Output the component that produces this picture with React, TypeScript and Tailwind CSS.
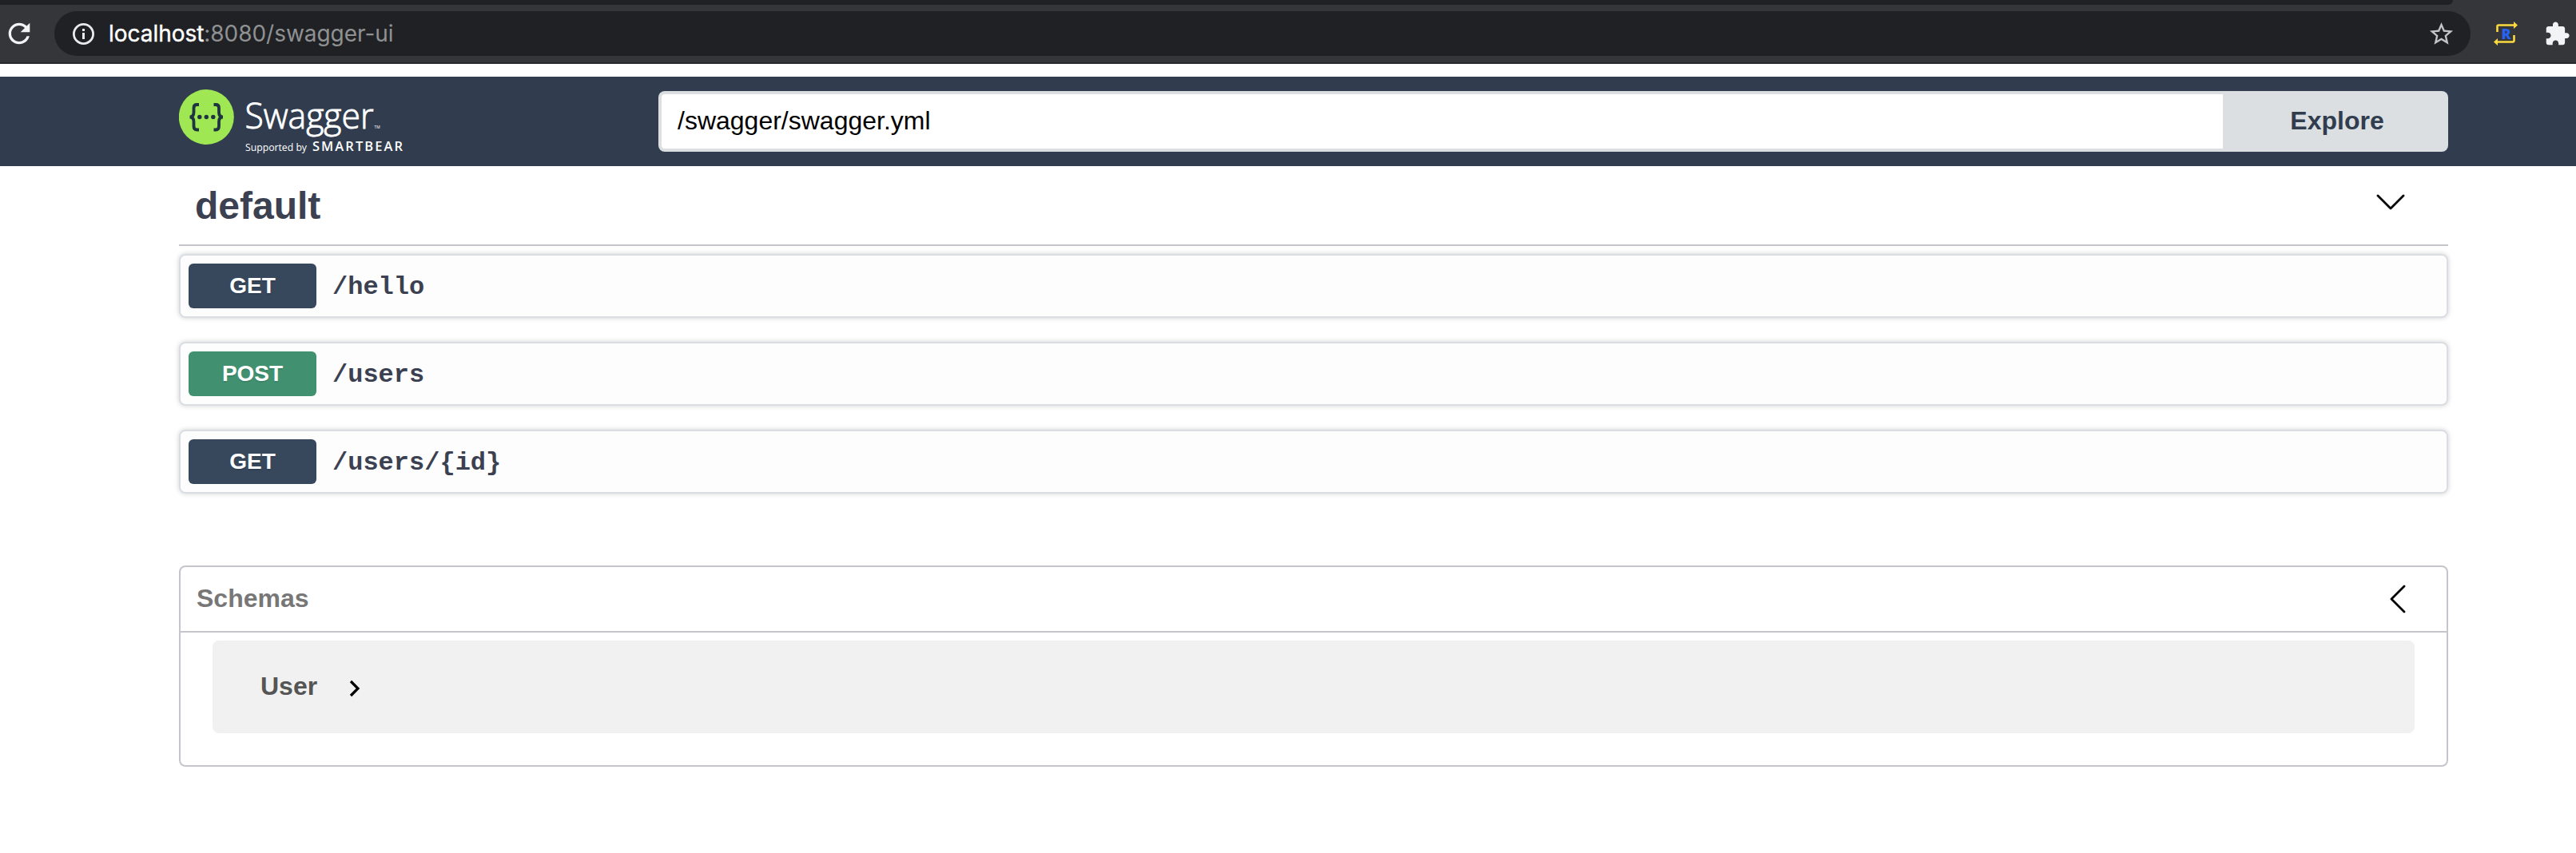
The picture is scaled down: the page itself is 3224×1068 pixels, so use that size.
const operations = [
  { method: "GET", path: "/hello", badge: "bg-[#37475c]" },
  { method: "POST", path: "/users", badge: "bg-[#419171]" },
  { method: "GET", path: "/users/{id}", badge: "bg-[#37475c]" },
];

function BrowserBar() {
  return (
    <div className="h-20 bg-[#35363a] border-b-2 border-[#28292b]">
      <div className="h-[6px] w-[3070px] rounded-br-[18px] bg-[#202124]" />
      <div className="flex h-[72px] items-center">
        <svg className="ml-1 mr-6 h-10 w-10 shrink-0" viewBox="0 0 24 24" fill="#f1f3f4">
          <path d="M17.65 6.35C16.2 4.9 14.21 4 12 4c-4.42 0-7.99 3.58-7.99 8s3.57 8 7.99 8c3.73 0 6.84-2.55 7.73-6h-2.08c-.82 2.33-3.04 4-5.65 4-3.31 0-6-2.69-6-6s2.69-6 6-6c1.66 0 3.14.69 4.22 1.78L13 11h7V4l-2.35 2.35z" />
        </svg>
        <div className="flex h-14 w-[3024px] shrink-0 items-center rounded-full bg-[#202124] pl-[22px] pr-[19px]">
          <svg className="h-7 w-7 shrink-0" viewBox="0 0 28 28" fill="none">
            <circle cx="14.500" cy="14.500" r="12.100" stroke="#e8eaed" strokeWidth="2.800" />
            <path d="M14.500 8v3M14.500 13v8" stroke="#e8eaed" strokeWidth="3" />
          </svg>
          <div className="ml-[18px] flex-1 font-['Inter',sans-serif] text-[28px] leading-none tracking-[-0.04px] text-[#8f9193]">
            <span className="text-white [-webkit-text-stroke:0.4px_#fff]">localhost</span>:8080/swagger-ui
          </div>
          <svg className="h-[35px] w-[35px]" viewBox="0 0 24 24" fill="#c3c4c6">
            <path d="M22 9.24l-7.19-.62L12 2 9.19 8.63 2 9.24l5.46 4.73L5.82 21 12 17.27 18.18 21l-1.63-7.03L22 9.24zM12 15.4l-3.76 2.27 1-4.28-3.32-2.88 4.38-.38L12 6.1l1.71 4.04 4.38.38-3.32 2.88 1 4.28L12 15.4z" />
          </svg>
        </div>
        <svg className="ml-7 h-8 w-8 shrink-0" viewBox="0 0 32 32" fill="none">
          <path d="M5.500 14V7a1.500 1.500 0 0 1 1.500-1.500H26M26.500 18v7a1.500 1.500 0 0 1-1.500 1.500H6" stroke="#fbd93f" strokeWidth="2.600" />
          <path d="M26 1l5 4.500-5 4.500zM6 22l-5 4.500 5 4.500z" fill="#fbd93f" />
          <text x="10.500" y="22.500" className="font-['Open_Sans',sans-serif] text-[18px] font-extrabold" fill="#2563f0">R</text>
        </svg>
        <svg className="ml-8 h-[33px] w-[33px] shrink-0" viewBox="0 0 24 24" fill="#f1f3f4">
          <path d="M20.5 11H19V7c0-1.1-.9-2-2-2h-4V3.5C13 2.12 11.88 1 10.5 1S8 2.12 8 3.5V5H4c-1.1 0-1.99.9-1.99 2v3.8H3.5c1.49 0 2.7 1.21 2.7 2.7s-1.21 2.7-2.7 2.7H2V20c0 1.1.9 2 2 2h3.800v-1.500c0-1.490 1.210-2.700 2.700-2.700 1.490 0 2.700 1.210 2.700 2.700V22H17c1.100 0 2-.9 2-2v-4h1.500c1.380 0 2.500-1.120 2.500-2.500S21.880 11 20.500 11z" />
        </svg>
      </div>
    </div>
  );
}

function Logo() {
  return (
    <svg className="h-[84px] w-[290px] shrink-0" viewBox="224 110 290 84" fill="none">
      <circle cx="258.300" cy="146.500" r="34.500" fill="#9fe854" />
      <g stroke="#1f3440" strokeWidth="3.800">
        <path d="M249 131h-2.500q-4 0-4 4v5.500q0 6-5 6q5 0 5 6v5.500q0 4.500 4 4.500H249" />
        <path d="M267.500 131h2.500q4 0 4 4v5.500q0 6 5 6q-5 0-5 6v5.500q0 4.500-4 4.500h-2.500" />
      </g>
      <g fill="#1f3440">
        <circle cx="249.800" cy="146.500" r="2.700" />
        <circle cx="258.300" cy="146.500" r="2.700" />
        <circle cx="266.800" cy="146.500" r="2.700" />
      </g>
      <g fill="#fff" className="font-['Open_Sans',sans-serif]">
        <text x="306.500" y="161" textLength="161" lengthAdjust="spacingAndGlyphs" stroke="#fff" strokeWidth="0.900" className="text-[45px] font-light">Swagger</text>
        <text x="468.500" y="161" className="text-[5px]">TM</text>
        <text x="307" y="188.500" textLength="77" lengthAdjust="spacingAndGlyphs" className="text-[12.500px]">Supported by</text>
        <text x="391" y="188.500" textLength="113" className="text-[16.500px] font-semibold">SMARTBEAR</text>
      </g>
    </svg>
  );
}

export default function App() {
  return (
    <div className="h-[1068px] w-[3224px] overflow-hidden bg-white font-['Liberation_Sans',Arial,sans-serif] text-[#3b4151]">
      <BrowserBar />
      <header className="mt-4 flex h-28 items-center bg-[#313d4e] pl-[224px] pr-[160px]">
        <Logo />
        <div className="ml-[310px] flex h-[76px] w-[2240px] rounded-lg bg-[#dbdfe2] p-1">
          <div className="flex w-[1954px] items-center rounded-l-[4px] bg-white pb-[2px] pl-5 text-[32px] leading-none text-black">
            /swagger/swagger.yml
          </div>
          <button className="flex-1 pb-[2px] pl-2 text-[32px] font-bold leading-none text-[#313d4e]">Explore</button>
        </div>
      </header>

      <main className="ml-[224px] w-[2840px]">
        <div className="flex h-[100px] items-center justify-between border-b-2 border-[#c4c6cb] pl-5 pr-[52px]">
          <h3 className="pt-[2px] text-[48px] font-bold leading-none">default</h3>
          <svg className="mb-2 h-10 w-10" viewBox="0 0 40 40" fill="none" stroke="#000" strokeWidth="2.800" strokeLinecap="round" strokeLinejoin="round">
            <path d="M4 12l16 16 16-16" />
          </svg>
        </div>

        <div className="mt-[10px] flex flex-col gap-[30px]">
          {operations.map((op) => (
            <div key={op.method + op.path} className="flex h-20 items-center rounded-lg border-2 border-[#dadee2] bg-[#fdfdfd] px-[10px] shadow-[0_0_6px_rgba(0,0,0,0.19)]">
              <span className={"flex h-14 w-40 items-center justify-center rounded-md text-[28px] font-bold leading-none text-white [text-shadow:0_2px_0_rgba(0,0,0,0.1)] " + op.badge}>
                {op.method}
              </span>
              <span className="ml-5 pt-1 font-['Liberation_Mono',monospace] text-[32px] font-bold leading-none">{op.path}</span>
            </div>
          ))}
        </div>

        <section className="mt-[90px] h-[252px] rounded-lg border-2 border-[#c4c6cb]">
          <div className="flex h-[82px] items-center justify-between border-b-2 border-[#c4c6cb] pl-5 pr-[42px]">
            <h4 className="pb-[2px] text-[32px] font-bold leading-none text-[#777]">Schemas</h4>
            <svg className="h-10 w-10" viewBox="0 0 40 40" fill="none" stroke="#000" strokeWidth="2.800" strokeLinecap="round" strokeLinejoin="round">
              <path d="M29 4L13 20l16 16" />
            </svg>
          </div>
          <div className="mx-10 mt-[10px] flex h-[116px] items-center rounded-lg bg-[#f1f1f1] pl-[60px]">
            <span className="pb-[2px] text-[32px] font-bold leading-none text-[#555]">User</span>
            <svg className="ml-[36px] mt-1 h-6 w-6" viewBox="0 0 24 24" fill="none" stroke="#000" strokeWidth="3.200">
              <path d="M6 3l9 9-9 9" />
            </svg>
          </div>
        </section>
      </main>
    </div>
  );
}
